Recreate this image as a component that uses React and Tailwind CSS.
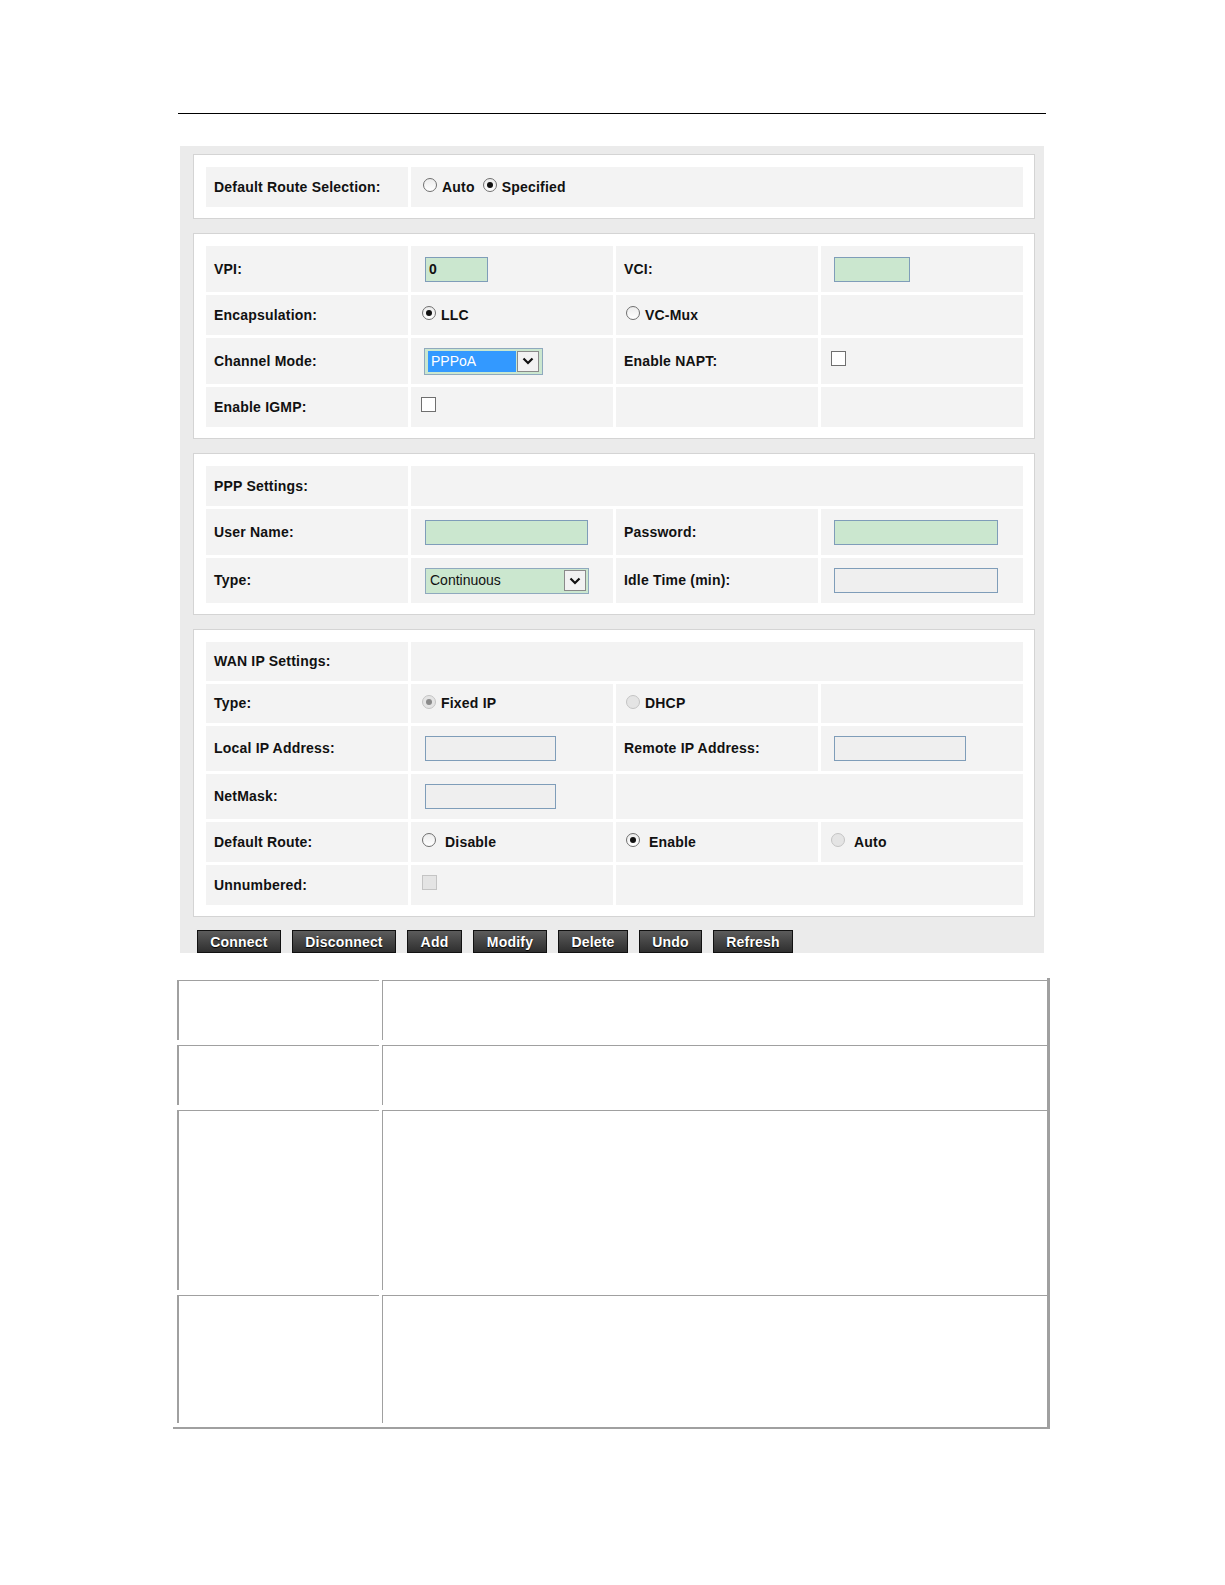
import React from 'react';

const Label = ({ children, className = '' }) => (
  <div className={`bg-[#f3f3f3] flex items-center pl-[8px] font-bold text-[14px] tracking-[0.2px] ${className}`}>
    {children}
  </div>
);

const Cell = ({ children, className = '' }) => (
  <div className={`bg-[#f3f3f3] flex items-center ${className}`}>{children}</div>
);

const Radio = ({ checked, disabled }) => (
  <span
    className={`inline-flex items-center justify-center w-[14px] h-[14px] rounded-full border shrink-0 -translate-y-[2px] ${
      disabled ? 'border-[#c4c4c4] bg-[#e4e4e4]' : 'border-[#6f6f6f] bg-linear-to-b from-[#ececec] to-white'
    }`}
  >
    {checked && (
      <span className={`w-[6px] h-[6px] rounded-full ${disabled ? 'bg-[#8a8a8a]' : 'bg-[#111]'}`} />
    )}
  </span>
);

const Check = ({ disabled }) => (
  <span
    className={`inline-block w-[15px] h-[15px] border -translate-y-[3px] ${
      disabled ? 'border-[#c4c4c4] bg-[#e4e4e4]' : 'border-[#6f6f6f] bg-white'
    }`}
  />
);

const Field = ({ width, green, value = '' }) => (
  <input
    readOnly
    value={value}
    className={`${width} h-[25px] border border-[#7f9db9] ${green ? 'bg-[#cbe7cf]' : 'bg-[#efefef]'} pl-[3px] text-[14px] font-bold outline-none`}
  />
);

const Arrow = () => (
  <span className="w-[22px] h-[21px] bg-[#f2f2f2] border border-[#8a8a8a] flex items-center justify-center shrink-0">
    <svg width="12" height="8" viewBox="0 0 12 8">
      <path d="M1.5 1.5 L6 6 L10.5 1.5" fill="none" stroke="#111" strokeWidth="2.2" />
    </svg>
  </span>
);

const Box = ({ children }) => (
  <div className="bg-white border border-[#d4d4d4] pt-[12px] pb-[11px] pl-[12px] pr-[11px] flex flex-col gap-[3px]">
    {children}
  </div>
);

const Row = ({ h, children }) => <div className={`grid grid-cols-4 gap-x-[3px] ${h}`}>{children}</div>;

const RadioText = ({ checked, disabled, text, gap = 'gap-[5px]' }) => (
  <span className={`flex items-center ${gap} font-bold text-[14px] tracking-[0.2px]`}>
    <Radio checked={checked} disabled={disabled} />
    <span>{text}</span>
  </span>
);

const buttons = [
  ['Connect', 'w-[84px]'],
  ['Disconnect', 'w-[104px]'],
  ['Add', 'w-[55px]'],
  ['Modify', 'w-[74px]'],
  ['Delete', 'w-[70px]'],
  ['Undo', 'w-[63px]'],
  ['Refresh', 'w-[80px]'],
];

const tableRows = ['h-[60px]', 'h-[60px]', 'h-[180px]', 'h-[128px]'];

export default function App() {
  return (
    <div className="w-[1225px] min-h-[1585px] bg-white text-[#111] font-['Liberation_Sans',Arial,sans-serif] pt-[113px]">
      <div className="ml-[178px] w-[868px] h-px bg-black" />

      {/* settings panel */}
      <div className="ml-[180px] mt-[32px] w-[864px] bg-[#ebebeb] pt-[8px] pl-[13px] pr-[9px]">
        <div className="flex flex-col gap-[14px]">
          <Box>
            <Row h="h-[40px]">
              <Label>Default Route Selection:</Label>
              <Cell className="col-span-3 pl-[12px] gap-[8px]">
                <RadioText text="Auto" />
                <RadioText checked text="Specified" />
              </Cell>
            </Row>
          </Box>

          <Box>
            <Row h="h-[46px]">
              <Label>VPI:</Label>
              <Cell className="pl-[14px]">
                <Field width="w-[63px]" green value="0" />
              </Cell>
              <Label>VCI:</Label>
              <Cell className="pl-[13px]">
                <Field width="w-[76px]" green />
              </Cell>
            </Row>
            <Row h="h-[40px]">
              <Label>Encapsulation:</Label>
              <Cell className="pl-[11px]">
                <RadioText checked text="LLC" />
              </Cell>
              <Cell className="pl-[10px]">
                <RadioText text="VC-Mux" />
              </Cell>
              <Cell />
            </Row>
            <Row h="h-[46px]">
              <Label>Channel Mode:</Label>
              <Cell className="pl-[13px]">
                <div className="w-[119px] h-[27px] border border-[#8fa9be] bg-[#cbe7cf] flex items-center pl-[3px] pr-[3px] gap-[1px]">
                  <span className="flex-1 h-[21px] bg-[#3399ff] text-white text-[14px] leading-[21px] pl-[3px]">PPPoA</span>
                  <Arrow />
                </div>
              </Cell>
              <Label>Enable NAPT:</Label>
              <Cell className="pl-[10px]">
                <Check />
              </Cell>
            </Row>
            <Row h="h-[40px]">
              <Label>Enable IGMP:</Label>
              <Cell className="pl-[10px]">
                <Check />
              </Cell>
              <Cell />
              <Cell />
            </Row>
          </Box>

          <Box>
            <Row h="h-[40px]">
              <Label>PPP Settings:</Label>
              <Cell className="col-span-3" />
            </Row>
            <Row h="h-[46px]">
              <Label>User Name:</Label>
              <Cell className="pl-[14px]">
                <Field width="w-[163px]" green />
              </Cell>
              <Label>Password:</Label>
              <Cell className="pl-[13px]">
                <Field width="w-[164px]" green />
              </Cell>
            </Row>
            <Row h="h-[45px]">
              <Label>Type:</Label>
              <Cell className="pl-[14px]">
                <div className="w-[164px] h-[26px] border border-[#8fa9be] bg-[#cbe7cf] flex items-center pl-[4px] pr-[2px]">
                  <span className="flex-1 text-[14px]">Continuous</span>
                  <Arrow />
                </div>
              </Cell>
              <Label>Idle Time (min):</Label>
              <Cell className="pl-[13px]">
                <Field width="w-[164px]" />
              </Cell>
            </Row>
          </Box>

          <Box>
            <Row h="h-[39px]">
              <Label>WAN IP Settings:</Label>
              <Cell className="col-span-3" />
            </Row>
            <Row h="h-[39px]">
              <Label>Type:</Label>
              <Cell className="pl-[11px]">
                <RadioText checked disabled text="Fixed IP" />
              </Cell>
              <Cell className="pl-[10px]">
                <RadioText disabled text="DHCP" />
              </Cell>
              <Cell />
            </Row>
            <Row h="h-[45px]">
              <Label>Local IP Address:</Label>
              <Cell className="pl-[14px]">
                <Field width="w-[131px]" />
              </Cell>
              <Label>Remote IP Address:</Label>
              <Cell className="pl-[13px]">
                <Field width="w-[132px]" />
              </Cell>
            </Row>
            <Row h="h-[45px]">
              <Label>NetMask:</Label>
              <Cell className="pl-[14px]">
                <Field width="w-[131px]" />
              </Cell>
              <Cell className="col-span-2" />
            </Row>
            <Row h="h-[40px]">
              <Label>Default Route:</Label>
              <Cell className="pl-[11px]">
                <RadioText text="Disable" gap="gap-[9px]" />
              </Cell>
              <Cell className="pl-[10px]">
                <RadioText checked text="Enable" gap="gap-[9px]" />
              </Cell>
              <Cell className="pl-[10px]">
                <RadioText disabled text="Auto" gap="gap-[9px]" />
              </Cell>
            </Row>
            <Row h="h-[40px]">
              <Label>Unnumbered:</Label>
              <Cell className="pl-[11px]">
                <Check disabled />
              </Cell>
              <Cell className="col-span-2" />
            </Row>
          </Box>
        </div>

        <div className="flex gap-[11px] mt-[13px] pl-[4px]">
          {buttons.map(([label, w]) => (
            <button
              key={label}
              className={`${w} h-[23px] border border-[#111] bg-linear-to-b from-[#5c5c5c] to-[#2f2f2f] text-white font-bold text-[14px] leading-none tracking-[0.2px] [text-shadow:0_1px_1px_#000]`}
            >
              {label}
            </button>
          ))}
        </div>
      </div>

      {/* description table */}
      <div className="ml-[173px] mt-[25px] w-[877px] pl-[4px] pt-[2px] pb-[4px] border-r-[3px] border-b-2 border-[#a0a0a0] flex flex-col gap-[5px]">
        {tableRows.map((h, i) => (
          <div key={i} className={`flex gap-[3px] ${h}`}>
            <div className="w-[202px] border-t border-l-2 border-[#a0a0a0]" />
            <div className="flex-1 border-t border-l border-[#a0a0a0]" />
          </div>
        ))}
      </div>
    </div>
  );
}
